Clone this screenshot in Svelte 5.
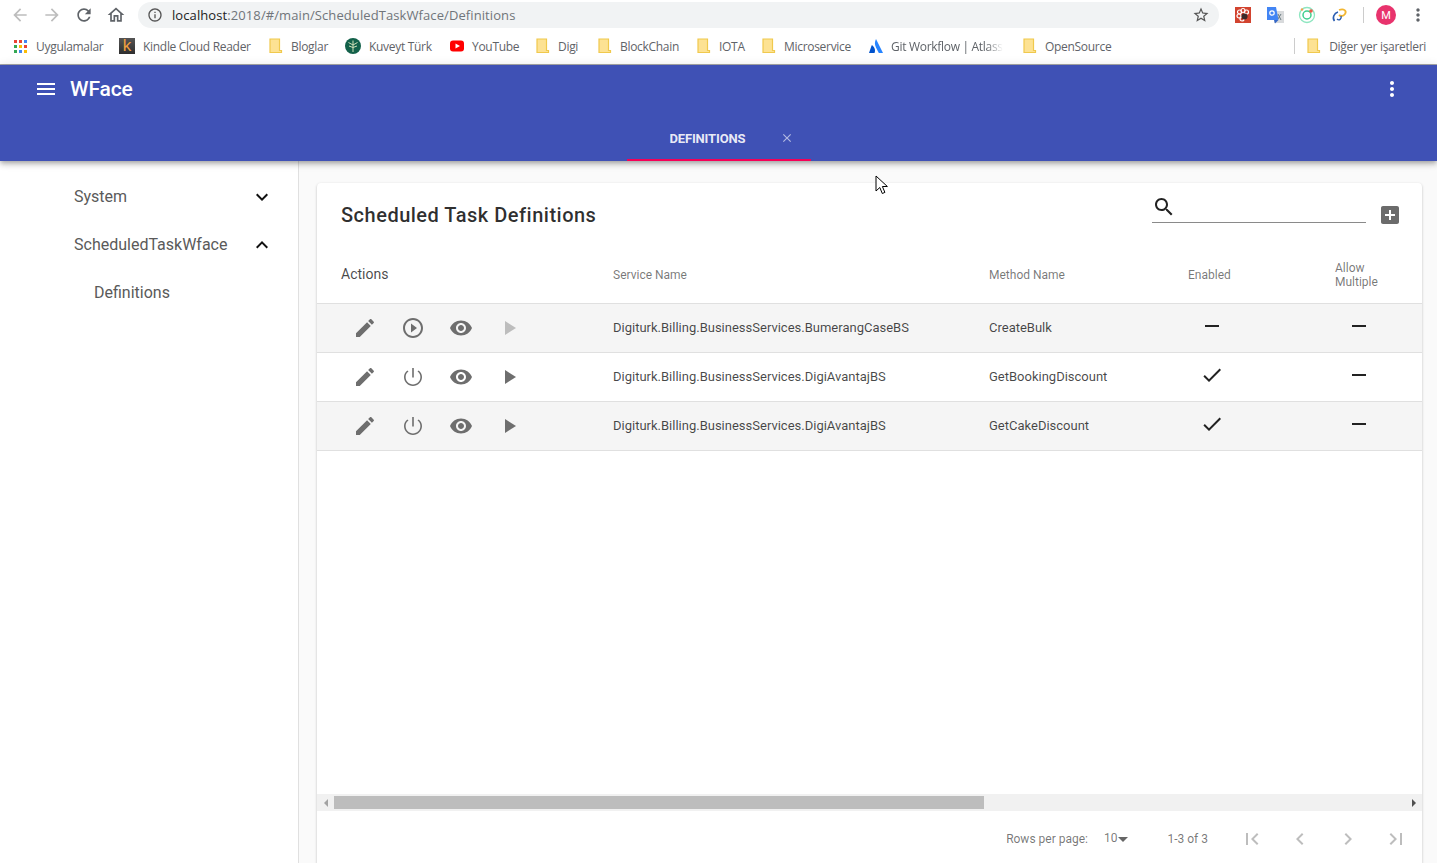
<script lang="ts">
  const icons = {
    menu: "M3 18h18v-2H3v2zm0-5h18v-2H3v2zm0-7v2h18V6H3z",
    edit: "M3 17.25V21h3.75L17.81 9.94l-3.75-3.75L3 17.25zM20.71 7.04c.39-.39.39-1.02 0-1.41l-2.34-2.34c-.39-.39-1.02-.39-1.41 0l-1.83 1.83 3.75 3.75 1.83-1.83z",
    playCircle: "M10 16.5l6-4.5-6-4.5v9zM12 2C6.48 2 2 6.48 2 12s4.48 10 10 10 10-4.48 10-10S17.52 2 12 2zm0 18c-4.41 0-8-3.59-8-8s3.59-8 8-8 8 3.59 8 8-3.59 8-8 8z",
    power: "M12.8 3h-1.6v9.6h1.6V3zm4.8 2.500l-1.100 1.100C18.300 7.900 19.400 9.800 19.400 12c0 4.100-3.300 7.400-7.400 7.400S4.600 16.100 4.600 12c0-2.200 1.100-4.100 2.900-5.400L6.400 5.500C4.400 7.100 3 9.400 3 12c0 4.900 4.100 9 9 9s9-4.100 9-9c0-2.600-1.400-4.900-3.400-6.500z",
    eye: "M12 4.5C7 4.5 2.73 7.61 1 12c1.730 4.390 6 7.500 11 7.500s9.270-3.110 11-7.500c-1.730-4.390-6-7.500-11-7.500zM12 17c-2.760 0-5-2.240-5-5s2.240-5 5-5 5 2.240 5 5-2.240 5-5 5zm0-8c-1.660 0-3 1.340-3 3s1.340 3 3 3 3-1.340 3-3-1.340-3-3-3z",
    play: "M8 5v14l11-7z",
    remove: "M19 13H5v-2h14v2z",
    check: "M9 16.17L4.83 12l-1.42 1.41L9 19 21 7l-1.41-1.41z",
    search: "M15.5 14h-.79l-.28-.27C15.41 12.59 16 11.11 16 9.5 16 5.910 13.090 3 9.500 3S3 5.910 3 9.500 5.910 16 9.500 16c1.610 0 3.090-.590 4.230-1.570l.270.280v.790l5 4.990L20.490 19l-4.990-5zm-6 0C7.010 14 5 11.990 5 9.500S7.010 5 9.500 5 14 7.010 14 9.500 11.990 14 9.500 14z",
    addBox: "M19 3H5c-1.110 0-2 .9-2 2v14c0 1.100.890 2 2 2h14c1.100 0 2-.9 2-2V5c0-1.100-.9-2-2-2zm-2 10h-4v4h-2v-4H7v-2h4V7h2v4h4v2z",
    expandMore: "M16.59 8.59L12 13.170 7.410 8.590 6 10l6 6 6-6z",
    expandLess: "M12 8l-6 6 1.410 1.410L12 10.830l4.590 4.580L18 14z",
    firstPage: "M18.41 16.59L13.82 12l4.590-4.590L17 6l-6 6 6 6zM6 6h2v12H6z",
    chevronLeft: "M15.41 7.41L14 6l-6 6 6 6 1.410-1.410L10.830 12z",
    chevronRight: "M10 6L8.590 7.410 13.170 12l-4.580 4.590L10 18l6-6z",
    lastPage: "M5.590 7.410L10.180 12l-4.590 4.590L7 18l6-6-6-6zM16 6h2v12h-2z",
    moreVert: "M12 8c1.100 0 2-.9 2-2s-.9-2-2-2-2 .9-2 2 .9 2 2 2zm0 2c-1.100 0-2 .9-2 2s.9 2 2 2 2-.9 2-2-.9-2-2-2zm0 6c-1.100 0-2 .9-2 2s.9 2 2 2 2-.9 2-2-.9-2-2-2z",
    close: "M19 6.410L17.590 5 12 10.590 6.410 5 5 6.410 10.590 12 5 17.590 6.410 19 12 13.410 17.590 19 19 17.590 13.410 12z",
    back: "M20 11H7.830l5.590-5.590L12 4l-8 8 8 8 1.410-1.410L7.830 13H20v-2z",
    forward: "M12 4l-1.410 1.410L16.170 11H4v2h12.170l-5.580 5.590L12 20l8-8z",
    reload: "M17.650 6.350C16.200 4.900 14.210 4 12 4c-4.420 0-7.990 3.580-7.990 8s3.570 8 7.990 8c3.730 0 6.840-2.550 7.730-6h-2.080c-.82 2.330-3.040 4-5.650 4-3.310 0-6-2.690-6-6s2.690-6 6-6c1.660 0 3.140.69 4.220 1.780L13 11h7V4l-2.350 2.350z",
    home: "M12 5.690l5 4.500V18h-2v-6H9v6H7v-7.810l5-4.500M12 3L2 12h3v8h6v-6h2v6h6v-8h3L12 3z",
    info: "M11 7h2v2h-2zm0 4h2v6h-2zm1-9C6.480 2 2 6.480 2 12s4.480 10 10 10 10-4.480 10-10S17.520 2 12 2zm0 18c-4.410 0-8-3.590-8-8s3.590-8 8-8 8 3.590 8 8-3.590 8-8 8z",
    star: "M22 9.240l-7.190-.62L12 2 9.190 8.630 2 9.240l5.460 4.730L5.820 21 12 17.270 18.180 21l-1.630-7.030L22 9.240zM12 15.400l-3.760 2.270 1-4.280-3.320-2.880 4.380-.38L12 6.100l1.710 4.040 4.380.38-3.320 2.880 1 4.280L12 15.400z",
  };

  // bookmark bar, width is the slot up to the next item
  const bookmarks = [
    { label: "Uygulamalar", icon: "apps", w: 107 },
    { label: "Kindle Cloud Reader", icon: "kindle", w: 150 },
    { label: "Bloglar", icon: "folder", w: 76 },
    { label: "Kuveyt Türk", icon: "kuveyt", w: 104 },
    { label: "YouTube", icon: "youtube", w: 87 },
    { label: "Digi", icon: "folder", w: 62 },
    { label: "BlockChain", icon: "folder", w: 99 },
    { label: "IOTA", icon: "folder", w: 65 },
    { label: "Microservice", icon: "folder", w: 106 },
    { label: "Git Workflow | Atlassian", icon: "atlassian", w: 155 },
    { label: "OpenSource", icon: "folder", w: 100 },
  ];

  const appsColors = ["#ea4335", "#ea4335", "#4285f4", "#34a853", "#fbbc05", "#ea4335", "#34a853", "#4285f4", "#fbbc05"];

  const rows = [
    { service: "Digiturk.Billing.BusinessServices.BumerangCaseBS", method: "CreateBulk", enabled: false, multiple: false, running: false },
    { service: "Digiturk.Billing.BusinessServices.DigiAvantajBS", method: "GetBookingDiscount", enabled: true, multiple: false, running: true },
    { service: "Digiturk.Billing.BusinessServices.DigiAvantajBS", method: "GetCakeDiscount", enabled: true, multiple: false, running: true },
  ];
</script>

{#snippet icon(d, size = 24, cls = "")}
  <svg class={cls} width={size} height={size} viewBox="0 0 24 24" fill="currentColor"><path {d} /></svg>
{/snippet}

{#snippet folder()}
  <svg width="14" height="16" viewBox="0 0 14 16"><path d="M1 1h9.500v11.500h2v2H1z" fill="#fde293" stroke="#f0c94d" stroke-width="1.200" /></svg>
{/snippet}

<div class="page">
  <div class="chrome">
    <div class="toolbar">
      <span class="nav dim">{@render icon(icons.back, 20)}</span>
      <span class="nav dim">{@render icon(icons.forward, 20)}</span>
      <span class="nav">{@render icon(icons.reload, 20)}</span>
      <span class="nav">{@render icon(icons.home, 20)}</span>
      <div class="omnibox">
        <span class="info">{@render icon(icons.info, 16)}</span>
        <span class="url"><b>localhost</b>:2018/#/main/ScheduledTaskWface/Definitions</span>
        <span class="star">{@render icon(icons.star, 18)}</span>
      </div>
      <div class="extensions">
        <svg width="18" height="18" viewBox="0 0 18 18">
          <rect x="1" y="1" width="16" height="16" fill="#d2432f" />
          <circle cx="5.500" cy="6" r="2" fill="none" stroke="#fff" stroke-width="1.200" />
          <circle cx="9" cy="4.500" r="2" fill="none" stroke="#fff" stroke-width="1.200" />
          <circle cx="12.500" cy="6" r="2" fill="none" stroke="#fff" stroke-width="1.200" />
          <circle cx="5" cy="10" r="2" fill="none" stroke="#fff" stroke-width="1.200" />
          <circle cx="8" cy="13" r="2" fill="none" stroke="#fff" stroke-width="1.200" />
          <circle cx="10.500" cy="10.500" r="3" fill="#3a2a2a" />
        </svg>
        <svg width="18" height="18" viewBox="0 0 18 18">
          <rect x="8" y="5" width="10" height="12" fill="#d8dadc" />
          <path d="M12 8l3 6M15 8l-3 5" stroke="#6a7a80" stroke-width="1" />
          <path d="M1 1h9l2.500 13H1z" fill="#4285f4" />
          <circle cx="6" cy="7" r="2.200" fill="none" stroke="#fff" stroke-width="1.200" />
          <path d="M9 17.500l3.500-3.500H8z" fill="#3367c9" />
        </svg>
        <svg width="18" height="18" viewBox="0 0 18 18">
          <circle cx="9" cy="9" r="7.500" fill="none" stroke="#8ee6c0" stroke-width="1.300" />
          <circle cx="9" cy="9" r="4" fill="none" stroke="#3ecf8e" stroke-width="1.500" />
          <circle cx="13" cy="5" r="1.800" fill="#ea5b4a" />
          <circle cx="4" cy="3.500" r="1.200" fill="#f0a050" />
        </svg>
        <svg width="18" height="18" viewBox="0 0 18 18">
          <path d="M4.500 15C2 12 4 7 8 6" fill="none" stroke="#2a5db0" stroke-width="1.600" />
          <path d="M9 4c5-2 8 1 6 4s-5 2-6 1" fill="none" stroke="#f2b632" stroke-width="1.800" />
          <path d="M7 13c2 2 5 0 4-3" fill="none" stroke="#2a5db0" stroke-width="1.400" />
        </svg>
      </div>
      <span class="chrome-sep"></span>
      <span class="avatar">M</span>
      <span class="chrome-more">{@render icon(icons.moreVert, 20)}</span>
    </div>
    <div class="bookmarks">
      {#each bookmarks as b}
        <div class="bookmark" class:fade={b.icon === "atlassian"} style="width: {b.w}px">
          <span class="fav {b.icon}">
            {#if b.icon === "folder"}
              {@render folder()}
            {:else if b.icon === "apps"}
              <span class="apps">
                {#each appsColors as c}<i style="background: {c}"></i>{/each}
              </span>
            {:else if b.icon === "kindle"}
              <span class="kindle">k</span>
            {:else if b.icon === "kuveyt"}
              <svg width="16" height="16" viewBox="0 0 16 16">
                <circle cx="8" cy="8" r="8" fill="#13614a" />
                <path d="M8 14V7M8 7L3.500 4.500M8 7l4.500-2.500M8 7V2.500M8 9.500L4 8M8 9.500L12 8" stroke="#cfe0b8" stroke-width="1" fill="none" />
              </svg>
            {:else if b.icon === "youtube"}
              <svg width="16" height="16" viewBox="0 0 16 16">
                <rect x="1" y="2.500" width="14" height="11" rx="3" fill="#f00" />
                <path d="M6.500 5.500v5L11 8z" fill="#fff" />
              </svg>
            {:else if b.icon === "atlassian"}
              <svg width="16" height="16" viewBox="0 0 16 16">
                <path d="M8 1c-1.500 3-1.500 5.500 0 8.500l2.800 5.500h4.200z" fill="#2684ff" />
                <path d="M4.500 7.500c-.3-.4-.7-.3-.9.100L1 15h5.500c1-2 .8-5-2-7.500z" fill="#0052cc" />
              </svg>
            {/if}
          </span>
          <span class="bm-label">{b.label}</span>
        </div>
      {/each}
      <span class="bm-spacer"></span>
      <span class="bm-sep"></span>
      <div class="bookmark other">
        <span class="fav folder">{@render folder()}</span>
        <span class="bm-label">Diğer yer işaretleri</span>
      </div>
    </div>
  </div>

  <header class="appbar">
    <div class="appbar-top">
      <span class="appbar-menu">{@render icon(icons.menu, 24)}</span>
      <span class="brand">WFace</span>
      <span class="appbar-more">{@render icon(icons.moreVert, 24)}</span>
    </div>
    <div class="tabs">
      <div class="tab">
        <span class="tab-label">DEFINITIONS</span>
        <span class="tab-close">{@render icon(icons.close, 14)}</span>
      </div>
    </div>
  </header>

  <div class="body">
    <aside class="sidebar">
      <div class="nav-item">
        <span>System</span>
        {@render icon(icons.expandMore, 24)}
      </div>
      <div class="nav-item">
        <span>ScheduledTaskWface</span>
        {@render icon(icons.expandLess, 24)}
      </div>
      <div class="nav-item sub"><span>Definitions</span></div>
    </aside>

    <main class="content">
      <section class="card">
        <div class="card-head">
          <h2>Scheduled Task Definitions</h2>
          <div class="search">{@render icon(icons.search, 24)}</div>
          <span class="add">{@render icon(icons.addBox, 24)}</span>
        </div>

        <div class="table">
          <div class="row head">
            <div class="col-actions">Actions</div>
            <div>Service Name</div>
            <div>Method Name</div>
            <div>Enabled</div>
            <div>Allow<br />Multiple</div>
          </div>
          {#each rows as r, i}
            <div class="row" class:odd={i % 2 === 0}>
              <div class="actions">
                <span class="act">{@render icon(icons.edit, 24)}</span>
                <span class="act">{@render icon(r.running ? icons.power : icons.playCircle, 24)}</span>
                <span class="act">{@render icon(icons.eye, 24)}</span>
                <span class="act" class:disabled={!r.running}>{@render icon(icons.play, 24)}</span>
              </div>
              <div class="cell">{r.service}</div>
              <div class="cell">{r.method}</div>
              <div class="flag">{@render icon(r.enabled ? icons.check : icons.remove, 24)}</div>
              <div class="flag">{@render icon(r.multiple ? icons.check : icons.remove, 24)}</div>
            </div>
          {/each}
        </div>

        <div class="scrollbar">
          <span class="arrow left"></span>
          <span class="track"><span class="thumb"></span></span>
          <span class="arrow right"></span>
        </div>

        <div class="pagination">
          <span class="rpp">Rows per page:</span>
          <span class="rpp-value">10<i class="caret"></i></span>
          <span class="range">1-3 of 3</span>
          <span class="pg">{@render icon(icons.firstPage, 24)}</span>
          <span class="pg">{@render icon(icons.chevronLeft, 24)}</span>
          <span class="pg">{@render icon(icons.chevronRight, 24)}</span>
          <span class="pg">{@render icon(icons.lastPage, 24)}</span>
        </div>
      </section>
    </main>
  </div>

  <svg class="cursor" width="14" height="20" viewBox="0 0 14 20">
    <path d="M1 1v15l3.800-3.500 2.500 6 2.600-1.100-2.500-5.900h5z" fill="#fff" stroke="#000" stroke-width="1" />
  </svg>
</div>

<style>
  :global(body) {
    margin: 0;
    overflow: hidden;
  }

  .page {
    position: relative;
    height: 863px;
    overflow: hidden;
    display: flex;
    flex-direction: column;
    background: #fafafa;
    font-family: Roboto, sans-serif;
  }

  /* browser chrome */
  .chrome {
    background: #fff;
    height: 64px;
    border-bottom: 1px solid #a8a8a8;
    flex: none;
    font-family: "Open Sans", sans-serif;
  }
  .toolbar {
    height: 30px;
    display: flex;
    align-items: center;
    padding-left: 4px;
    color: #5f6368;
  }
  .nav {
    width: 32px;
    display: flex;
    justify-content: center;
    flex: none;
  }
  .nav.dim {
    color: #bdbdbd;
  }
  .omnibox {
    margin-left: 6px;
    width: 1081px;
    height: 26px;
    border-radius: 13px;
    background: #f1f3f4;
    display: flex;
    align-items: center;
    flex: none;
  }
  .info {
    display: flex;
    margin-left: 9px;
    color: #555;
  }
  .url {
    margin-left: 9px;
    font-size: 13px;
    letter-spacing: 0.09px;
    color: #70757a;
    flex: 1;
  }
  .url b {
    font-weight: 400;
    color: #222;
  }
  .star {
    display: flex;
    margin-right: 9px;
    color: #555;
  }
  .extensions {
    margin-left: 15px;
    display: flex;
    gap: 14px;
    flex: none;
  }
  .chrome-sep {
    width: 1px;
    height: 16px;
    background: #ccc;
    margin-left: 15px;
    flex: none;
  }
  .avatar {
    width: 20px;
    height: 20px;
    border-radius: 50%;
    background: #e8336d;
    color: #fff;
    font-size: 11px;
    font-family: Roboto, sans-serif;
    display: flex;
    align-items: center;
    justify-content: center;
    margin-left: 12px;
    flex: none;
  }
  .chrome-more {
    display: flex;
    margin-left: 12px;
    flex: none;
  }
  .bookmarks {
    height: 34px;
    padding-bottom: 2px;
    box-sizing: border-box;
    display: flex;
    align-items: center;
    padding-left: 12px;
    color: #5f6368;
    font-size: 12px;
  }
  .bookmark {
    display: flex;
    align-items: center;
    flex: none;
    overflow: hidden;
    white-space: nowrap;
  }
  .fav {
    width: 16px;
    height: 16px;
    display: flex;
    align-items: center;
    justify-content: center;
    margin-right: 8px;
    flex: none;
  }
  .fav.folder {
    justify-content: flex-start;
    margin-right: 6px;
  }
  .fav.youtube,
  .fav.atlassian {
    margin-right: 7px;
  }
  .bm-label {
    letter-spacing: -0.3px;
  }
  .fade .bm-label {
    width: 112px;
    overflow: hidden;
    -webkit-mask-image: linear-gradient(to right, #000 85%, transparent);
    mask-image: linear-gradient(to right, #000 85%, transparent);
  }
  .bm-spacer {
    flex: 1;
  }
  .bm-sep {
    width: 1px;
    height: 16px;
    background: #ccc;
    margin-right: 12px;
  }
  .other {
    margin-right: 11px;
  }
  .apps {
    display: grid;
    grid-template-columns: repeat(3, 3px);
    gap: 2px;
  }
  .apps i {
    width: 3px;
    height: 3px;
  }
  .kindle {
    width: 16px;
    height: 16px;
    background: linear-gradient(#555, #2e2e2e);
    color: #f0a040;
    font-family: "Liberation Sans", sans-serif;
    font-size: 17px;
    line-height: 15px;
    text-align: center;
  }

  /* app bar */
  .appbar {
    background: #3f51b5;
    color: #fff;
    height: 96px;
    flex: none;
    position: relative;
    z-index: 2;
    box-shadow: 0 2px 4px -1px rgba(0, 0, 0, 0.2), 0 4px 5px 0 rgba(0, 0, 0, 0.14), 0 1px 10px 0 rgba(0, 0, 0, 0.12);
  }
  .appbar-top {
    height: 48px;
    display: flex;
    align-items: center;
    padding-left: 34px;
    padding-right: 33px;
  }
  .appbar-menu,
  .appbar-more {
    display: flex;
  }
  .brand {
    font-size: 21px;
    font-weight: 500;
    margin-left: 12px;
    letter-spacing: -0.1px;
    flex: 1;
  }
  .tabs {
    height: 48px;
    display: flex;
    justify-content: center;
  }
  .tab {
    width: 184px;
    box-sizing: border-box;
    border-bottom: 2px solid #f50057;
    display: flex;
    align-items: center;
    padding-left: 43px;
    padding-top: 4px;
  }
  .tab-label {
    font-size: 13px;
    font-weight: 700;
    letter-spacing: -0.15px;
    width: 110px;
    flex: none;
    color: rgba(255, 255, 255, 0.9);
  }
  .tab-close {
    display: flex;
    color: rgba(255, 255, 255, 0.6);
  }

  /* body */
  .body {
    flex: 1;
    display: flex;
    min-height: 0;
  }
  .sidebar {
    width: 299px;
    box-sizing: border-box;
    background: #fff;
    border-right: 1px solid #e0e0e0;
    padding-top: 12px;
    flex: none;
  }
  .nav-item {
    height: 48px;
    padding-left: 74px;
    padding-right: 24px;
    display: flex;
    align-items: center;
    justify-content: space-between;
    font-size: 16px;
    color: #5a5a5a;
  }
  .nav-item span {
    margin-top: -2px;
  }
  .nav-item svg {
    color: #111;
  }
  .nav-item.sub {
    padding-left: 94px;
  }
  .content {
    flex: 1;
    padding: 22px 15px 0 18px;
    min-width: 0;
  }
  .card {
    height: 684px;
    background: #fff;
    border-radius: 4px;
    box-shadow: 0 1px 3px 0 rgba(0, 0, 0, 0.2), 0 1px 1px 0 rgba(0, 0, 0, 0.14), 0 2px 1px -1px rgba(0, 0, 0, 0.12);
    display: flex;
    flex-direction: column;
  }
  .card-head {
    height: 67px;
    display: flex;
    align-items: flex-start;
    padding-left: 24px;
    flex: none;
  }
  h2 {
    margin: 18px 0 0;
    font-size: 20px;
    line-height: 28px;
    font-weight: 500;
    letter-spacing: 0.5px;
    color: rgba(0, 0, 0, 0.82);
    flex: 1;
  }
  .search {
    width: 214px;
    height: 40px;
    box-sizing: border-box;
    border-bottom: 1px solid #8a8a8a;
    color: #222;
    display: flex;
    padding-top: 12px;
  }
  .add {
    display: flex;
    color: #6b6b6b;
    margin: 20px 20px 0 12px;
  }
  .table {
    flex: 1;
    min-height: 0;
  }
  .row {
    display: grid;
    grid-template-columns: 272px 376px 199px 147px 1fr;
    padding-left: 24px;
    height: 49px;
    box-sizing: border-box;
    align-items: center;
    border-bottom: 1px solid #e0e0e0;
    font-size: 13px;
    color: rgba(0, 0, 0, 0.72);
  }
  .row.head {
    height: 54px;
    padding-bottom: 4px;
    font-size: 12px;
    color: rgba(0, 0, 0, 0.54);
    line-height: 14px;
  }
  .col-actions {
    font-size: 14px;
    margin-bottom: 2px;
    color: rgba(0, 0, 0, 0.72);
  }
  .cell {
    margin-bottom: 2px;
  }
  .row.odd {
    background: #f5f5f5;
  }
  .actions {
    display: flex;
  }
  .act {
    width: 48px;
    display: flex;
    justify-content: center;
    color: #6e6e6e;
  }
  .act.disabled {
    color: #bdbdbd;
  }
  .flag {
    width: 48px;
    display: flex;
    justify-content: center;
    color: #222;
    margin-top: -4px;
  }
  .scrollbar {
    height: 17px;
    flex: none;
    background: #f1f1f1;
    display: flex;
    align-items: center;
  }
  .arrow {
    width: 17px;
    flex: none;
    display: flex;
    justify-content: center;
  }
  .arrow::before {
    content: "";
    border-top: 4px solid transparent;
    border-bottom: 4px solid transparent;
  }
  .arrow.left::before {
    border-right: 4px solid #a3a3a3;
  }
  .arrow.right::before {
    border-left: 4px solid #505050;
  }
  .track {
    flex: 1;
  }
  .thumb {
    display: block;
    width: 650px;
    height: 13px;
    background: #bdbdbd;
  }
  .pagination {
    height: 56px;
    flex: none;
    display: flex;
    align-items: center;
    justify-content: flex-end;
    padding-right: 2px;
    font-size: 12px;
    color: rgba(0, 0, 0, 0.54);
  }
  .rpp-value {
    margin-left: 16px;
    display: flex;
    align-items: center;
    margin-top: -2px;
  }
  .caret {
    border-left: 5px solid transparent;
    border-right: 5px solid transparent;
    border-top: 5px solid #666;
    margin-left: 1px;
    margin-top: 2px;
  }
  .range {
    margin-left: 39px;
    margin-right: 20px;
  }
  .pg {
    width: 48px;
    display: flex;
    justify-content: center;
    color: rgba(0, 0, 0, 0.26);
  }
  .cursor {
    position: absolute;
    left: 875px;
    top: 175px;
    z-index: 5;
  }
</style>
